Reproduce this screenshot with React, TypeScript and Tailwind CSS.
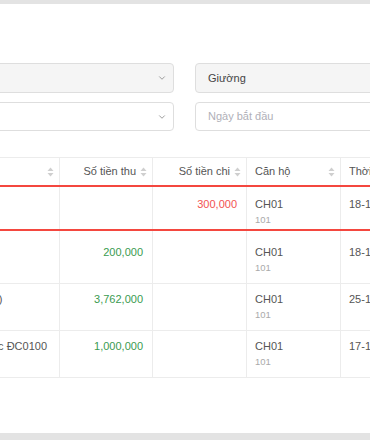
import { ChevronDown } from 'lucide-react';

type Row = {
  note: string;
  income?: string;
  expense?: string;
  room: string;
  sub: string;
  date: string;
  rowClass: string;
  pad: string;
};

const rows: Row[] = [
  { note: 'Chi sửa điện', expense: '300,000', room: 'CH01', sub: '101', date: '18-11-2023', rowClass: 'h-[46px] border-y-2 border-[#f4473f]', pad: 'pt-[8px]' },
  { note: 'Thu phí dịch vụ', income: '200,000', room: 'CH01', sub: '101', date: '18-11-2023', rowClass: 'h-[53px] border-b border-[#ececec]', pad: 'pt-[12px]' },
  { note: 'Thu tiền nhà (T1)', income: '3,762,000', room: 'CH01', sub: '101', date: '25-11-2023', rowClass: 'h-[47px] border-b border-[#ececec]', pad: 'pt-[6px]' },
  { note: 'Hoàn tiền đặt cọc ĐC0100', income: '1,000,000', room: 'CH01', sub: '101', date: '17-11-2023', rowClass: 'h-[47px] border-b border-[#ececec]', pad: 'pt-[6px]' },
];

const cols = 'grid grid-cols-[150px_93px_94px_94px_120px]';

function SortIcon() {
  return (
    <svg width="7" height="10" viewBox="0 0 7 10" className="shrink-0">
      <path d="M3.5 0.5 L6.5 4 L0.5 4 Z" fill="#cfcfcf" />
      <path d="M3.5 9.5 L6.5 6 L0.5 6 Z" fill="#cfcfcf" />
    </svg>
  );
}

function HeadCell({ label, align }: { label: string; align: 'left' | 'right' }) {
  return (
    <div className="flex items-center border-r border-[#ececec] pl-2 pr-[5px] gap-1">
      <span className={`flex-1 truncate ${align === 'right' ? 'text-right' : ''}`}>{label}</span>
      <SortIcon />
    </div>
  );
}

export default function App() {
  return (
    <div
      className="w-[370px] h-[440px] bg-[#e3e3e3] pt-1 overflow-hidden"
      style={{ fontFamily: '"Liberation Sans", Arial, sans-serif' }}
    >
      <div className="h-[429px] bg-white overflow-hidden">
        {/* filters */}
        <div className="pt-[59px] ml-[-26px] grid grid-cols-[200px_200px] gap-x-[21px] gap-y-[9px] text-[11px]">
          <div className="h-[30px] rounded border border-[#dedede] bg-[#f5f5f5] flex items-center justify-end pr-[6px] text-[#8a8a8a]">
            <ChevronDown size={10} strokeWidth={2} />
          </div>
          <div className="h-[30px] rounded border border-[#dedede] bg-[#f5f5f5] flex items-center pl-3 text-[#444]">
            Giường
          </div>
          <div className="h-[29px] rounded border border-[#dedede] bg-white flex items-center justify-end pr-[6px] text-[#8a8a8a]">
            <ChevronDown size={10} strokeWidth={2} />
          </div>
          <div className="h-[29px] rounded border border-[#dedede] bg-white flex items-center pl-3 text-[#b0b0b8]">
            Ngày bắt đầu
          </div>
        </div>

        {/* table */}
        <div className="mt-[26px] ml-[-90px] w-[551px] text-[11px]">
          <div className={`${cols} h-[28px] border-t border-[#ececec] text-[#555]`}>
            <HeadCell label="Nội dung" align="left" />
            <HeadCell label="Số tiền thu" align="right" />
            <HeadCell label="Số tiền chi" align="right" />
            <HeadCell label="Căn hộ" align="left" />
            <HeadCell label="Thời gian" align="left" />
          </div>
          {rows.map((r, i) => (
            <div key={i} className={`${cols} ${r.rowClass} text-[#555]`}>
              <div className={`border-r border-[#ececec] ${r.pad} pl-2 pr-2 leading-[18px] whitespace-nowrap overflow-hidden`}>
                {r.note}
              </div>
              <div className={`border-r border-[#ececec] ${r.pad} pr-[9px] text-right leading-[18px] text-[#3a9b50]`}>
                {r.income}
              </div>
              <div className={`border-r border-[#ececec] ${r.pad} pr-[9px] text-right leading-[18px] text-[#f25252]`}>
                {r.expense}
              </div>
              <div className={`border-r border-[#ececec] ${r.pad} pl-2 flex flex-col`}>
                <span className="leading-[18px]">{r.room}</span>
                <span className="text-[9.5px] leading-[14px] text-[#aaa]">{r.sub}</span>
              </div>
              <div className={`border-r border-[#ececec] ${r.pad} pl-2 leading-[18px]`}>{r.date}</div>
            </div>
          ))}
        </div>
      </div>
    </div>
  );
}
